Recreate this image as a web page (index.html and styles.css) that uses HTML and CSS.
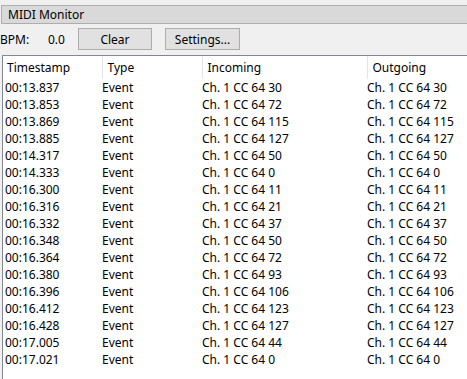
FILE: index.html
```html
<!DOCTYPE html>
<html lang="en">

<head>
    <meta charset="UTF-8">
    <title>MIDI Monitor</title>
    <link rel="stylesheet" href="styles.css">
</head>

<body>
    <div class="titlebar">MIDI Monitor</div>

    <div class="toolbar">
        <span class="bpm-label">BPM:</span>
        <span class="bpm-value">0.0</span>
        <button class="btn btn-clear">Clear</button>
        <button class="btn btn-settings">Settings...</button>
    </div>

    <div class="list">
        <table class="events">
            <colgroup>
                <col class="col-time">
                <col class="col-type">
                <col class="col-in">
                <col>
            </colgroup>
            <thead>
                <tr>
                    <th>Timestamp</th>
                    <th>Type</th>
                    <th>Incoming</th>
                    <th>Outgoing</th>
                </tr>
            </thead>
            <tbody>
                <tr><td>00:13.837</td><td>Event</td><td>Ch. 1 CC 64 30</td><td>Ch. 1 CC 64 30</td></tr>
                <tr><td>00:13.853</td><td>Event</td><td>Ch. 1 CC 64 72</td><td>Ch. 1 CC 64 72</td></tr>
                <tr><td>00:13.869</td><td>Event</td><td>Ch. 1 CC 64 115</td><td>Ch. 1 CC 64 115</td></tr>
                <tr><td>00:13.885</td><td>Event</td><td>Ch. 1 CC 64 127</td><td>Ch. 1 CC 64 127</td></tr>
                <tr><td>00:14.317</td><td>Event</td><td>Ch. 1 CC 64 50</td><td>Ch. 1 CC 64 50</td></tr>
                <tr><td>00:14.333</td><td>Event</td><td>Ch. 1 CC 64 0</td><td>Ch. 1 CC 64 0</td></tr>
                <tr><td>00:16.300</td><td>Event</td><td>Ch. 1 CC 64 11</td><td>Ch. 1 CC 64 11</td></tr>
                <tr><td>00:16.316</td><td>Event</td><td>Ch. 1 CC 64 21</td><td>Ch. 1 CC 64 21</td></tr>
                <tr><td>00:16.332</td><td>Event</td><td>Ch. 1 CC 64 37</td><td>Ch. 1 CC 64 37</td></tr>
                <tr><td>00:16.348</td><td>Event</td><td>Ch. 1 CC 64 50</td><td>Ch. 1 CC 64 50</td></tr>
                <tr><td>00:16.364</td><td>Event</td><td>Ch. 1 CC 64 72</td><td>Ch. 1 CC 64 72</td></tr>
                <tr><td>00:16.380</td><td>Event</td><td>Ch. 1 CC 64 93</td><td>Ch. 1 CC 64 93</td></tr>
                <tr><td>00:16.396</td><td>Event</td><td>Ch. 1 CC 64 106</td><td>Ch. 1 CC 64 106</td></tr>
                <tr><td>00:16.412</td><td>Event</td><td>Ch. 1 CC 64 123</td><td>Ch. 1 CC 64 123</td></tr>
                <tr><td>00:16.428</td><td>Event</td><td>Ch. 1 CC 64 127</td><td>Ch. 1 CC 64 127</td></tr>
                <tr><td>00:17.005</td><td>Event</td><td>Ch. 1 CC 64 44</td><td>Ch. 1 CC 64 44</td></tr>
                <tr><td>00:17.021</td><td>Event</td><td>Ch. 1 CC 64 0</td><td>Ch. 1 CC 64 0</td></tr>
            </tbody>
        </table>
    </div>
</body>

</html>
```

FILE: styles.css
```css
body {
    font-family: "Noto Sans", "Liberation Sans", sans-serif;
    font-size: 12px;
    color: #000;
    margin: 0;
    height: 100vh;
    display: flex;
    flex-direction: column;
    background-color: #f0f0f0;
    overflow: hidden;
}

.titlebar {
    margin: 5px 0 0 1px;
    height: 17px;
    line-height: 17px;
    padding-left: 6px;
    background-color: #d9d9d9;
    border: 1px solid #adadad;
    border-right: none;
}

.toolbar {
    display: flex;
    align-items: center;
    height: 30px;
    padding-bottom: 1px;
}

.bpm-label {
    width: 48px;
}

.bpm-value {
    width: 30px;
}

.btn {
    font-family: inherit;
    font-size: 12px;
    color: #000;
    height: 22px;
    padding: 0;
    background-color: #e1e1e1;
    border: 1px solid #adadad;
    border-radius: 0;
}

.btn-clear {
    width: 74px;
    margin-right: 13px;
}

.btn-settings {
    width: 75px;
}

.list {
    flex: 1;
    margin-left: 2px;
    background-color: #fff;
    border-left: 1px solid #828790;
    border-top: 1px solid #828790;
}

.events {
    width: 100%;
    table-layout: fixed;
    border-collapse: collapse;
}

.col-time {
    width: 99px;
}

.col-type {
    width: 100px;
}

.col-in {
    width: 165px;
}

th {
    height: 23px;
    padding: 0 0 0 5px;
    font-weight: normal;
    text-align: left;
    border-right: 1px solid #e5e5e5;
}

th:first-child {
    padding-left: 4px;
}

th:last-child {
    border-right: none;
}

td {
    height: 17px;
    padding: 0;
    line-height: 17px;
    white-space: nowrap;
}

td:first-child {
    padding-left: 2px;
}
```
